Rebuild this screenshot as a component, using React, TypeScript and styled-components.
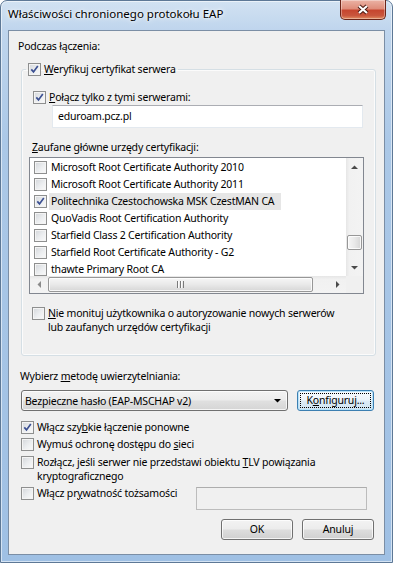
import React from 'react';
import styled, { createGlobalStyle } from 'styled-components';

const GlobalStyle = createGlobalStyle`
  html, body { margin: 0; padding: 0; background: #fff; }
  body {
    width: 393px;
    height: 563px;
    overflow: hidden;
    font-family: 'Noto Sans', 'Open Sans', sans-serif;
    font-size: 10.5px;
    letter-spacing: -0.2px;
    color: #000;
  }
`;

const Window = styled.div`
  box-sizing: border-box;
  width: 393px;
  height: 563px;
  display: flex;
  flex-direction: column;
  padding: 0 7px 7px;
  border: 1px solid #5d7896;
  border-radius: 7px 7px 0 0;
  background: linear-gradient(180deg, #d2e2f2 0px, #bfd5ed 29px, #abc8e7 140px, #9fc0e4 100%);
  box-shadow: inset 0 0 0 1px rgba(255, 255, 255, 0.55);
`;

const TitleBar = styled.div`
  flex: none;
  height: 29px;
  display: flex;
  align-items: flex-start;
  justify-content: space-between;
`;

const Title = styled.div`
  padding-top: 6px;
  font-size: 11.5px;
  letter-spacing: 0;
  line-height: 13px;
  text-shadow: 0 0 6px #fff, 0 0 3px #fff;
`;

const CloseButton = styled.div`
  box-sizing: border-box;
  width: 46px;
  height: 20px;
  margin: -1px -1px 0 0;
  border: 1px solid #6b2418;
  border-top: none;
  border-radius: 0 0 5px 5px;
  background: linear-gradient(180deg, #ebb3a5 0%, #df8d7b 45%, #c6462f 55%, #c9563d 82%, #e28d60 100%);
  box-shadow: inset 0 0 0 1px rgba(255, 255, 255, 0.35);
  display: flex;
  align-items: center;
  justify-content: center;
`;

const Client = styled.div`
  flex: 1;
  display: flex;
  flex-direction: column;
  background: #f0f0f0;
  border: 1px solid #7b8ea5;
`;

const Heading = styled.div`
  padding: 9px 0 0 9px;
  line-height: 13px;
`;

const GroupBox = styled.fieldset`
  box-sizing: border-box;
  width: 355px;
  min-width: 0;
  margin: 10px 0 0 12px;
  padding: 0;
  border: 1px solid #d5dfe5;
  border-radius: 3px;
  box-shadow: inset 0 0 0 1px #fbfbfb;
`;

const Legend = styled.legend`
  margin-left: 4px;
  padding: 0 2px;
`;

const GroupBody = styled.div`
  display: flex;
  flex-direction: column;
  align-items: flex-start;
  padding: 15px 0 21px 11px;
`;

const CheckRow = styled.label<{ $mt?: number; $ml?: number }>`
  display: flex;
  align-items: flex-start;
  gap: 3px;
  margin-top: ${(p) => p.$mt ?? 0}px;
  margin-left: ${(p) => p.$ml ?? 0}px;
  line-height: 13px;
  white-space: nowrap;
`;

const Wrapped = styled.span`
  line-height: 14px;
  margin-top: -1px;
`;

const Box = styled.span`
  flex: none;
  box-sizing: border-box;
  width: 13px;
  height: 13px;
  border: 1px solid #8e8f8f;
  background: linear-gradient(135deg, #d3d6da 0%, #eceef0 55%, #fafafa 100%);
  box-shadow: inset 0 0 0 1px #f4f4f4;
  display: flex;
  align-items: center;
  justify-content: center;
`;

const TextBox = styled.div<{ $w: number; $ml?: number; $mt?: number; $disabled?: boolean }>`
  box-sizing: border-box;
  width: ${(p) => p.$w}px;
  height: 23px;
  margin: ${(p) => p.$mt ?? 0}px 0 0 ${(p) => p.$ml ?? 0}px;
  border: 1px solid ${(p) => (p.$disabled ? '#bcbcbc' : '#e3e9ef')};
  border-top-color: ${(p) => (p.$disabled ? '#adadad' : '#abadb3')};
  background: ${(p) => (p.$disabled ? '#f0f0f0' : '#fff')};
  padding: 0 5px;
  line-height: 21px;
`;

const FieldLabel = styled.div<{ $mt: number; $ml?: number }>`
  margin-top: ${(p) => p.$mt}px;
  margin-left: ${(p) => p.$ml ?? 0}px;
  line-height: 13px;
`;

const ListBox = styled.div`
  box-sizing: border-box;
  width: 335px;
  height: 137px;
  margin: 3px 0 0 -4px;
  border: 1px solid #828790;
  background: #fff;
  display: grid;
  grid-template-columns: 1fr 17px;
  grid-template-rows: 1fr 17px;
`;

const Items = styled.div`
  overflow: hidden;
  padding-top: 1px;
`;

const Item = styled.div`
  height: 17px;
  display: flex;
  align-items: center;
  gap: 2px;
  padding-left: 4px;
  white-space: nowrap;
`;

const ItemText = styled.span<{ $selected?: boolean }>`
  line-height: 17px;
  padding: 0 7px 0 2px;
  background: ${(p) => (p.$selected ? '#e6e6e6' : 'transparent')};
`;

const VScroll = styled.div`
  display: flex;
  flex-direction: column;
  background: linear-gradient(90deg, #e6e6e6 0%, #f1f1f1 20%, #f3f3f3 100%);
`;

const HScroll = styled.div`
  display: flex;
  background: linear-gradient(180deg, #e6e6e6 0%, #f1f1f1 20%, #f3f3f3 100%);
`;

const Corner = styled.div`
  background: #f0f0f0;
`;

const ArrowCell = styled.div`
  flex: none;
  width: 17px;
  height: 17px;
  display: flex;
  align-items: center;
  justify-content: center;
`;

const Track = styled.div<{ $vertical?: boolean }>`
  flex: 1;
  display: flex;
  flex-direction: ${(p) => (p.$vertical ? 'column' : 'row')};
`;

const Thumb = styled.div<{ $vertical?: boolean; $offset: number; $size: number }>`
  box-sizing: border-box;
  flex: none;
  border: 1px solid #979797;
  border-radius: 2px;
  display: flex;
  align-items: center;
  justify-content: center;
  ${(p) =>
    p.$vertical
      ? `margin: ${p.$offset}px 1px 0; width: 15px; height: ${p.$size}px;
         background: linear-gradient(90deg, #f6f6f6 0%, #e9e9e9 50%, #d6d6d6 100%);`
      : `margin: 1px 0 1px ${p.$offset}px; height: 15px; width: ${p.$size}px;
         background: linear-gradient(180deg, #f6f6f6 0%, #e9e9e9 50%, #d6d6d6 100%);`}
  box-shadow: inset 0 0 0 1px rgba(255, 255, 255, 0.8);
`;

const Grip = styled.span`
  width: 7px;
  height: 7px;
  background: repeating-linear-gradient(90deg, #7a7a7a 0 1px, #fcfcfc 1px 2px, transparent 2px 3px);
`;

const Section = styled.div`
  display: flex;
  flex-direction: column;
  align-items: flex-start;
  padding: 0 10px 0 12px;
`;

const MethodRow = styled.div`
  align-self: stretch;
  display: flex;
  align-items: flex-start;
  justify-content: space-between;
  margin-top: 7px;
`;

const Combo = styled.div`
  box-sizing: border-box;
  width: 267px;
  height: 21px;
  border: 1px solid #707070;
  border-radius: 3px;
  background: linear-gradient(180deg, #f3f3f3 0%, #ececec 48%, #e0e0e0 52%, #d5d5d5 100%);
  box-shadow: inset 0 0 0 1px rgba(255, 255, 255, 0.75);
  display: flex;
  align-items: center;
  justify-content: space-between;
  padding: 0 6px 0 3px;
`;

const Button = styled.div<{ $w: number; $focused?: boolean }>`
  box-sizing: border-box;
  width: ${(p) => p.$w}px;
  height: 21px;
  padding: 2px;
  border: 1px solid ${(p) => (p.$focused ? '#3c7fb1' : '#707070')};
  border-radius: 3px;
  background: ${(p) =>
    p.$focused
      ? 'linear-gradient(180deg, #f7fbfe 0%, #edf4fa 48%, #dcebf6 52%, #cfe4f3 100%)'
      : 'linear-gradient(180deg, #f3f3f3 0%, #ececec 48%, #dddddd 52%, #d0d0d0 100%)'};
  box-shadow: inset 0 0 0 1px ${(p) => (p.$focused ? 'rgba(180, 225, 250, 0.9)' : 'rgba(255, 255, 255, 0.75)')};
  display: flex;
`;

const ButtonFace = styled.span<{ $focused?: boolean }>`
  flex: 1;
  box-sizing: border-box;
  border: 1px dotted ${(p) => (p.$focused ? '#000' : 'transparent')};
  display: flex;
  align-items: center;
  justify-content: center;
  line-height: 13px;
`;

const IdentityRow = styled.div`
  align-self: stretch;
  display: flex;
  align-items: flex-start;
  justify-content: space-between;
  margin-top: 4px;
  padding-right: 7px;
`;

const Buttons = styled.div`
  align-self: stretch;
  display: flex;
  justify-content: flex-end;
  gap: 9px;
  margin-top: 9px;
`;

const Check = ({ checked }: { checked?: boolean }) => (
  <Box>
    {checked && (
      <svg width="9" height="9" viewBox="0 0 9 9">
        <path d="M1.3 4.4 L3.5 6.9 L7.8 1.1" fill="none" stroke="#3c5092" strokeWidth="1.7" />
      </svg>
    )}
  </Box>
);

const Arrow = ({ dir, color = '#4a4a4a' }: { dir: 'up' | 'down' | 'left' | 'right'; color?: string }) => {
  const vertical = dir === 'up' || dir === 'down';
  const d = {
    up: 'M0 4 L3.5 0.5 L7 4 Z',
    down: 'M0 0 L7 0 L3.5 3.5 Z',
    left: 'M4 0 L4 7 L0.5 3.5 Z',
    right: 'M0 0 L3.5 3.5 L0 7 Z',
  }[dir];
  return (
    <svg width={vertical ? 7 : 4} height={vertical ? 4 : 7} viewBox={vertical ? '0 0 7 4' : '0 0 4 7'}>
      <path d={d} fill={color} />
    </svg>
  );
};

const certs: [string, boolean][] = [
  ['Microsoft Root Certificate Authority 2010', false],
  ['Microsoft Root Certificate Authority 2011', false],
  ['Politechnika Czestochowska MSK CzestMAN CA', true],
  ['QuoVadis Root Certification Authority', false],
  ['Starfield Class 2 Certification Authority', false],
  ['Starfield Root Certificate Authority - G2', false],
  ['thawte Primary Root CA', false],
];

export default function App() {
  return (
    <>
      <GlobalStyle />
      <Window>
        <TitleBar>
          <Title>Właściwości chronionego protokołu EAP</Title>
          <CloseButton>
            <svg width="14" height="11" viewBox="0 0 14 11">
              <path d="M3 2 L11 9 M11 2 L3 9" stroke="#4a1a12" strokeWidth="4.2" />
              <path d="M3 2 L11 9 M11 2 L3 9" stroke="#fff" strokeWidth="2.2" />
            </svg>
          </CloseButton>
        </TitleBar>

        <Client>
          <Heading>Podczas łączenia:</Heading>

          <GroupBox>
            <Legend>
              <CheckRow>
                <Check checked />
                <span>
                  <u>W</u>eryfikuj certyfikat serwera
                </span>
              </CheckRow>
            </Legend>
            <GroupBody>
              <CheckRow>
                <Check checked />
                <span>
                  <u>P</u>ołącz tylko z tymi serwerami:
                </span>
              </CheckRow>
              <TextBox $w={311} $ml={19} $mt={1}>
                eduroam.pcz.pl
              </TextBox>

              <FieldLabel $mt={13} $ml={-1}>
                <u>Z</u>aufane główne urzędy certyfikacji:
              </FieldLabel>
              <ListBox>
                <Items>
                  {certs.map(([name, checked], i) => (
                    <Item key={name}>
                      <Check checked={checked} />
                      <ItemText $selected={i === 2}>{name}</ItemText>
                    </Item>
                  ))}
                </Items>
                <VScroll>
                  <ArrowCell>
                    <Arrow dir="up" />
                  </ArrowCell>
                  <Track $vertical>
                    <Thumb $vertical $offset={60} $size={15} />
                  </Track>
                  <ArrowCell>
                    <Arrow dir="down" />
                  </ArrowCell>
                </VScroll>
                <HScroll>
                  <ArrowCell>
                    <Arrow dir="left" color="#8a8a8a" />
                  </ArrowCell>
                  <Track>
                    <Thumb $offset={1} $size={265}>
                      <Grip />
                    </Thumb>
                  </Track>
                  <ArrowCell>
                    <Arrow dir="right" />
                  </ArrowCell>
                </HScroll>
                <Corner />
              </ListBox>

              <CheckRow $mt={13} $ml={-1}>
                <Check />
                <Wrapped>
                  <u>N</u>ie monituj użytkownika o autoryzowanie nowych serwerów
                  <br />
                  lub zaufanych urzędów certyfikacji
                </Wrapped>
              </CheckRow>
            </GroupBody>
          </GroupBox>

          <Section>
            <FieldLabel $mt={14} $ml={-1}>
              Wybierz <u>m</u>etodę uwierzytelniania:
            </FieldLabel>
            <MethodRow>
              <Combo>
                <span>Bezpieczne hasło (EAP-MSCHAP v2)</span>
                <Arrow dir="down" color="#000" />
              </Combo>
              <Button $w={77} $focused>
                <ButtonFace $focused>
                  <span>
                    K<u>o</u>nfiguruj...
                  </span>
                </ButtonFace>
              </Button>
            </MethodRow>

            <CheckRow $mt={10}>
              <Check checked />
              <span>
                Włącz szy<u>b</u>kie łączenie ponowne
              </span>
            </CheckRow>
            <CheckRow $mt={4}>
              <Check />
              <span>
                Wymuś ochronę dostępu do <u>s</u>ieci
              </span>
            </CheckRow>
            <CheckRow $mt={5}>
              <Check />
              <Wrapped>
                Rozłącz, jeśli serwer nie przedstawi obiektu <u>T</u>LV powiązania
                <br />
                kryptograficznego
              </Wrapped>
            </CheckRow>
            <IdentityRow>
              <CheckRow>
                <Check />
                <span>
                  Włącz pr<u>y</u>watność tożsamości
                </span>
              </CheckRow>
              <TextBox $w={171} $disabled />
            </IdentityRow>

            <Buttons>
              <Button $w={72}>
                <ButtonFace>OK</ButtonFace>
              </Button>
              <Button $w={72}>
                <ButtonFace>Anuluj</ButtonFace>
              </Button>
            </Buttons>
          </Section>
        </Client>
      </Window>
    </>
  );
}
